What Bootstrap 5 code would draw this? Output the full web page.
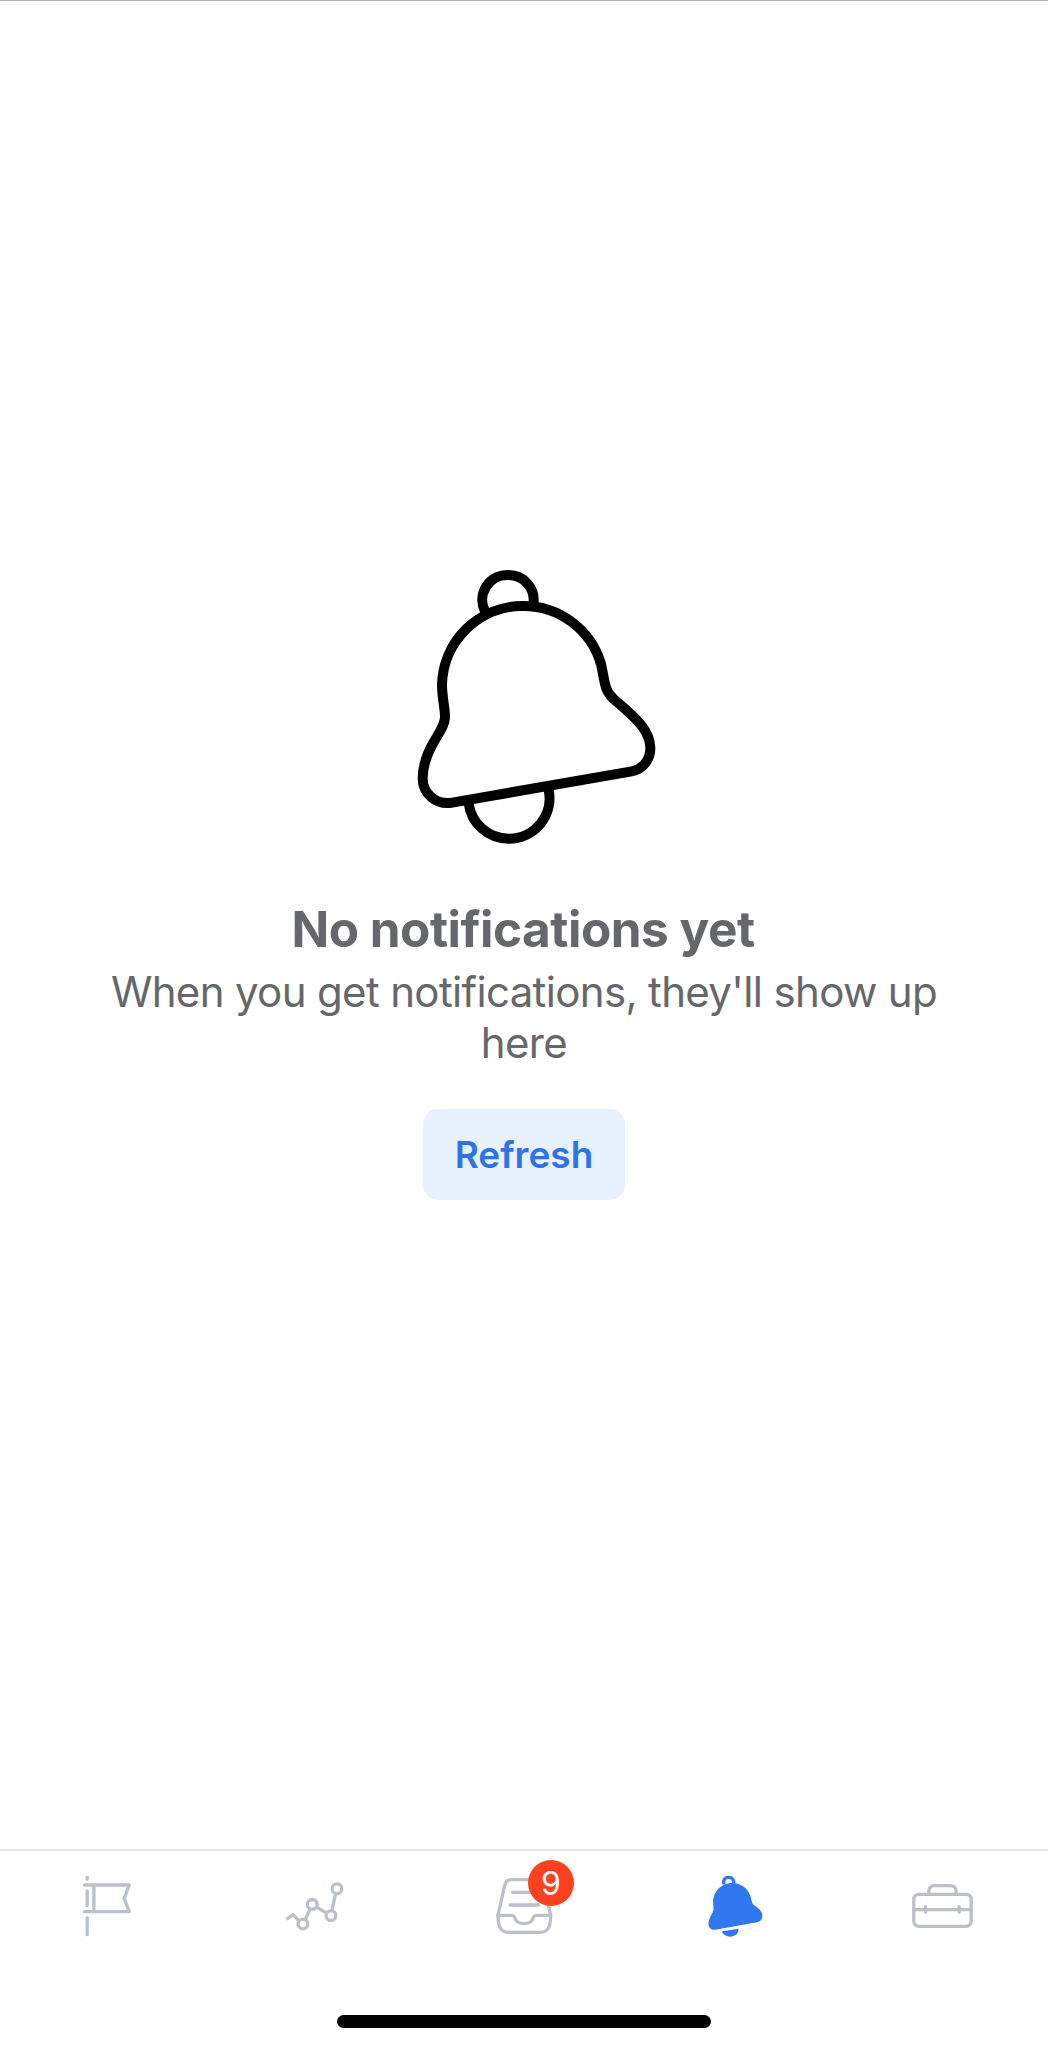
<!DOCTYPE html>
<html lang="en">
<head>
<meta charset="utf-8">
<meta name="viewport" content="width=device-width, initial-scale=1">
<title>Notifications</title>
<link href="https://cdn.jsdelivr.net/npm/bootstrap@5.3.0/dist/css/bootstrap.min.css" rel="stylesheet">
<style>
  body { font-family: Inter, "Liberation Sans", sans-serif; background: #fff; color: #65676b; }
  .screen { height: 2048px; border-top: 1px solid #b4b4b6; overflow: hidden; }
  .empty-state { padding-top: 549px; }
  .bell-art { width: 270px; height: 310px; margin-left: 22px; }
  .empty-title { font-size: 49.5px; line-height: 60px; font-weight: 700; margin-top: 39px; margin-right: 2px; letter-spacing: -.5px; }
  .empty-text { font-size: 42px; line-height: 50.5px; margin-top: 8px; letter-spacing: -.65px; }
  .btn-refresh { --bs-btn-bg: #e8f1fe; --bs-btn-color: #2f74e6; --bs-btn-hover-bg: #dbe8fd; --bs-btn-hover-color: #2f74e6;
    width: 202px; height: 91px; margin-top: 41px; border-radius: 15px; font-size: 37px; font-weight: 600; padding: 0; border: 0; }
  .tabbar { height: 199px; border-top: 2px solid #e6e6e8; }
  .tab-item { color: #bcc0c9; padding-top: 4px; }
  .tab-item svg { width: 100px; height: 100px; }
  .tab-item.active { color: #3178f0; }
  .count-badge { left: 54px; top: 5px; width: 46px; height: 46px; background: #fb4220; color: #fff; font-size: 32px; line-height: 47px; }
  .home-bar { width: 374px; height: 13px; background: #000; margin-top: 60px; }
</style>
<script src="https://cdn.jsdelivr.net/npm/bootstrap@5.3.0/dist/js/bootstrap.bundle.min.js"></script>
</head>
<body>
<div class="screen d-flex flex-column">
  <main class="empty-state flex-grow-1 d-flex flex-column align-items-center text-center">
    <svg class="bell-art flex-shrink-0" viewBox="1 0 810 930" fill="none" stroke="#000" stroke-width="30" aria-hidden="true">
      <path d="M256 184A75 75 0 0 1 326 75A75 75 0 0 1 401 162"/>
      <path d="M207 760A121 121 0 0 0 327 866A121 121 0 0 0 446 716"/>
      <path stroke-linejoin="round" d="M158 758L696 664C733 657 753 625 752 592C750 545 715 512 680 480L642 447C624 430 619 418 616 402L604 342A242 242 0 0 0 368 168A242 242 0 0 0 127 405C127 440 136 475 136 500C136 525 117 550 100 580C85 607 69 645 69 685C69 732 110 766 158 758Z"/>
    </svg>
    <h1 class="empty-title mb-0">No notifications yet</h1>
    <p class="empty-text mb-0">When you get notifications, they'll show up<br>here</p>
    <button type="button" class="btn btn-refresh">Refresh</button>
  </main>
  <footer class="tabbar flex-shrink-0">
    <nav class="row g-0 row-cols-5 text-center">
      <a class="col tab-item" href="#" aria-label="Pages">
        <svg viewBox="-15.6 45 300 300" fill="none" stroke="currentColor" stroke-width="10" stroke-linecap="round" stroke-linejoin="round">
          <path d="M81 112V117M81 153V197M81 233V284M73 135H207L192 175L207 215H73M101 135V215"/>
        </svg>
      </a>
      <a class="col tab-item" href="#" aria-label="Insights">
        <svg viewBox="-16.8 -15 300 300" fill="none" stroke="currentColor" stroke-width="10" stroke-linecap="round" stroke-linejoin="round">
          <path d="M54 176L71 164L87 181M107 179L121 148M142 142L169 158M187 152L198 101"/>
          <circle cx="100" cy="192" r="14.5"/><circle cx="128" cy="133" r="14.5"/><circle cx="184" cy="167" r="14.5"/><circle cx="202" cy="86" r="14.5"/>
        </svg>
      </a>
      <a class="col tab-item text-decoration-none" href="#" aria-label="Inbox">
        <span class="d-inline-block position-relative">
          <svg viewBox="-18 45 300 300" fill="none" stroke="currentColor" stroke-width="10" stroke-linecap="round" stroke-linejoin="round">
            <path d="M54 226L74 136Q78 119 94 119H172Q188 119 192 136L212 226"/>
            <path d="M54 226H94Q102 226 104 233C109 257 155 257 160 233Q162 226 170 226H212C212 262 204 277 178 277H88C62 277 54 262 54 226Z"/>
            <path d="M98 157H168M90 195H175"/>
          </svg>
          <span class="count-badge position-absolute rounded-circle">9</span>
        </span>
      </a>
      <a class="col tab-item active" href="#" aria-label="Notifications">
        <svg viewBox="-19.2 -15 300 300" fill="currentColor">
          <path d="M101 73C97 59 104 52 115 52C126 52 131 60 130 71" fill="none" stroke="currentColor" stroke-width="10"/>
          <path d="M74 209L200 187C210 185 216 178 216 167C216 155 206 147 196 139C188 133 185 130 183 119C179 93 158 69 125 69C92 69 68 97 68 126C68 139 72 149 66 159C60 169 54 180 54 191C54 204 64 211 74 209Z"/>
          <path d="M97 214L144 206C146 219 134 230 119 230C108 230 99 224 95 217Q95 215 97 214Z"/>
        </svg>
      </a>
      <a class="col tab-item" href="#" aria-label="Tools">
        <svg viewBox="9.6 -15 300 300" fill="none" stroke="currentColor" stroke-width="10" stroke-linecap="round" stroke-linejoin="round">
          <rect x="72" y="103" width="172" height="96" rx="15"/>
          <path d="M117 101V95Q117 77 135 77H181Q199 77 199 95V101M72 149H244M107 140V157M208 140V157"/>
        </svg>
      </a>
    </nav>
    <div class="home-bar rounded-pill mx-auto"></div>
  </footer>
</div>
</body>
</html>
